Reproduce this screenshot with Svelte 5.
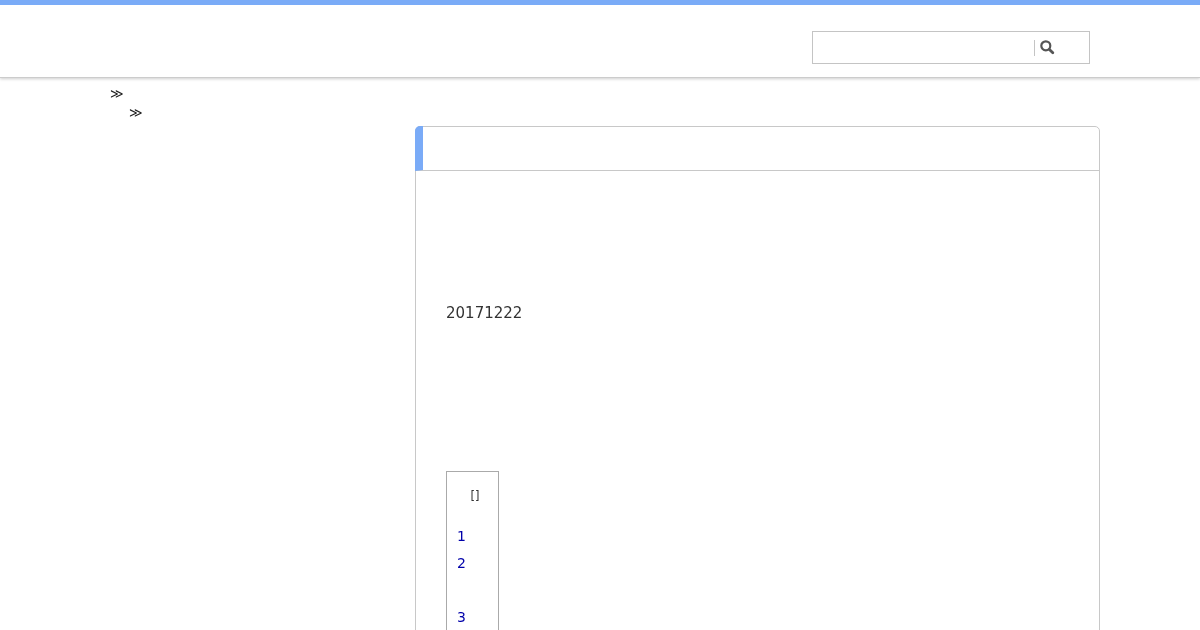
<script>
	let tocItems = [
		{ label: "1", gap: false },
		{ label: "2", gap: false },
		{ label: "3", gap: true }
	];
</script>

<div class="page">
	<header class="header">
		<form class="search" on:submit|preventDefault>
			<input class="search-input" type="text" aria-label="search" />
			<button class="search-btn" type="submit" aria-label="search">
				<svg width="15" height="15" viewBox="0 0 15 15">
					<circle cx="5.8" cy="5.8" r="4.5" fill="none" stroke="#555" stroke-width="2.2" />
					<path d="M9.4 9.4 12.8 12.8" stroke="#555" stroke-width="2.8" stroke-linecap="round" />
				</svg>
			</button>
		</form>
	</header>

	<nav class="crumbs">
		<div class="crumb">≫</div>
		<div class="crumb sub">≫</div>
	</nav>

	<main class="main">
		<section class="card">
			<div class="card-title"></div>
			<div class="card-body">
				<p class="date">20171222</p>
				<div class="toc">
					<div class="toc-head">[]</div>
					<ul class="toc-list">
						{#each tocItems as item}
							<li class:gap={item.gap}><a href="#top">{item.label}</a></li>
						{/each}
					</ul>
				</div>
			</div>
		</section>
	</main>
</div>

<style>
	:global(html), :global(body) {
		height: 630px;
		overflow: hidden;
	}

	:global(body) {
		background: #fff;
		font-family: "DejaVu Sans", sans-serif;
		color: #333;
	}

	/* own layer: gives the grey text antialiasing of the reference */
	.page {
		will-change: transform;
	}

	.header {
		box-sizing: border-box;
		height: 78px;
		border-top: 5px solid #7aabf7;
		border-bottom: 1px solid #ccc;
		box-shadow: 0 1px 3px rgba(0, 0, 0, 0.2);
		display: flex;
		justify-content: flex-end;
		align-items: flex-start;
		padding: 26px 110px 0 0;
	}

	.search {
		box-sizing: border-box;
		width: 278px;
		height: 33px;
		border: 1px solid #c4c4c4;
		display: flex;
		align-items: center;
	}

	.search-input {
		box-sizing: border-box;
		width: 222px;
		height: 16px;
		border: 0;
		border-right: 1px solid #c4c4c4;
		padding: 0;
		outline: none;
		background: transparent;
	}

	.search-btn {
		border: 0;
		background: none;
		padding: 0;
		margin-left: 5px;
		width: 15px;
		height: 15px;
		display: flex;
	}

	.crumbs {
		padding: 6px 0 0 110px;
		font-size: 13px;
		line-height: 19px;
		color: #222;
	}

	.sub {
		padding-left: 19px;
	}

	.main {
		display: flex;
		justify-content: flex-end;
		padding: 4px 100px 0 0;
	}

	.card {
		box-sizing: border-box;
		width: 685px;
		border: 1px solid #c8c8c8;
		border-radius: 5px 5px 0 0;
	}

	.card-title {
		box-sizing: border-box;
		height: 45px;
		margin: -1px 0 0 -1px;
		border-left: 8px solid #7aabf7;
		border-bottom: 1px solid #c8c8c8;
		border-radius: 5px 0 0 0;
	}

	.card-body {
		padding: 132px 30px 40px;
	}

	.date {
		margin: 0;
		font-size: 15px;
		line-height: 20px;
		color: #333;
	}

	.toc {
		box-sizing: border-box;
		width: 53px;
		margin-top: 148px;
		border: 1px solid #aaa;
		padding: 16px 10px 10px;
	}

	.toc-head {
		font-size: 11.5px;
		line-height: 16px;
		text-align: center;
		padding-left: 5px;
	}

	.toc-list {
		list-style: none;
		margin: 19px 0 0;
		padding: 0;
		font-size: 14px;
		line-height: 27px;
	}

	.toc-list li.gap {
		margin-top: 27px;
	}

	.toc-list a {
		color: #00a;
		text-decoration: none;
	}
</style>
